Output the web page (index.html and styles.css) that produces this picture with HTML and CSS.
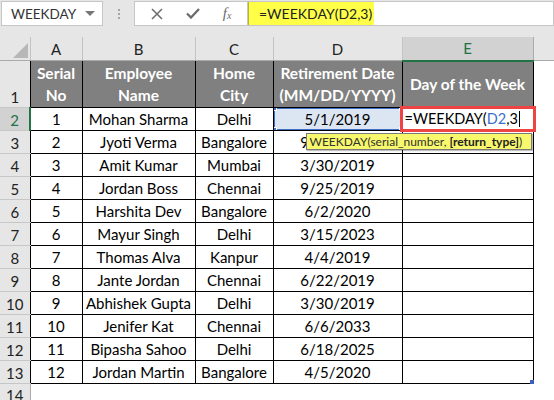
FILE: index.html
```html
<!DOCTYPE html>
<html lang="en">
<head>
    <meta charset="UTF-8">
    <title>WEEKDAY</title>
    <link rel="stylesheet" href="styles.css">
</head>
<body>
    <!-- formula bar -->
    <div class="topbar">
        <div class="namebox">
            <span class="namebox-text">WEEKDAY</span>
            <span class="caret"></span>
        </div>
        <div class="grip"><i></i><i></i><i></i></div>
        <div class="fbuttons">
            <svg class="ico" width="12" height="12" viewBox="0 0 12 12"><path d="M1 1 L11 11 M11 1 L1 11" stroke="#6b6b6b" stroke-width="1.5" fill="none"/></svg>
            <svg class="ico" width="14" height="11" viewBox="0 0 14 11"><path d="M1 5.5 L5 9.5 L13 1" stroke="#6b6b6b" stroke-width="2.3" fill="none"/></svg>
            <span class="fx">f<sub>x</sub></span>
        </div>
        <div class="finput"><span class="fhl">=WEEKDAY(D2,3)</span></div>
    </div>

    <!-- sheet -->
    <div class="sheet">
        <table class="grid">
            <colgroup>
                <col class="c-rh"><col class="c-a"><col class="c-b"><col class="c-c"><col class="c-d"><col class="c-e"><col class="c-f">
            </colgroup>
            <tr class="colhead">
                <th class="corner"><svg width="15" height="15" viewBox="0 0 15 15"><path d="M15 0 L15 15 L0 15 Z" fill="#b7b7b7"/></svg></th>
                <th>A</th><th>B</th><th>C</th><th>D</th><th class="sel">E</th><th class="f"></th>
            </tr>
            <tr class="r-head">
                <th class="rh">1</th>
                <td>Serial<br>No</td>
                <td>Employee<br>Name</td>
                <td>Home<br>City</td>
                <td>Retirement Date<br>(MM/DD/YYYY)</td>
                <td>Day of the Week</td>
                <td class="f"></td>
            </tr>
            <tr>
                <th class="rh sel">2</th>
                <td>1</td><td>Mohan Sharma</td><td>Delhi</td>
                <td class="ref">5/1/2019<span class="refbox"><i class="h tl"></i><i class="h tr"></i><i class="h bl"></i><i class="h br"></i></span></td>
                <td class="edit">=WEEKDAY(<span class="blue">D2</span>,3<span class="cursor"></span>
                    <span class="editbox"></span>
                    <div class="tip">WEEKDAY(serial_number, <b>[return_type]</b>)</div>
                </td>
                <td class="f"></td>
            </tr>
            <tr><th class="rh">3</th><td>2</td><td>Jyoti Verma</td><td>Bangalore</td><td>9/25/2021</td><td></td><td class="f"></td></tr>
            <tr><th class="rh">4</th><td>3</td><td>Amit Kumar</td><td>Mumbai</td><td>3/30/2019</td><td></td><td class="f"></td></tr>
            <tr><th class="rh">5</th><td>4</td><td>Jordan Boss</td><td>Chennai</td><td>9/25/2019</td><td></td><td class="f"></td></tr>
            <tr><th class="rh">6</th><td>5</td><td>Harshita Dev</td><td>Bangalore</td><td>6/2/2020</td><td></td><td class="f"></td></tr>
            <tr><th class="rh">7</th><td>6</td><td>Mayur Singh</td><td>Delhi</td><td>3/15/2023</td><td></td><td class="f"></td></tr>
            <tr><th class="rh">8</th><td>7</td><td>Thomas Alva</td><td>Kanpur</td><td>4/4/2019</td><td></td><td class="f"></td></tr>
            <tr><th class="rh">9</th><td>8</td><td>Jante Jordan</td><td>Chennai</td><td>6/22/2019</td><td></td><td class="f"></td></tr>
            <tr><th class="rh">10</th><td>9</td><td>Abhishek Gupta</td><td>Delhi</td><td>3/30/2019</td><td></td><td class="f"></td></tr>
            <tr><th class="rh">11</th><td>10</td><td>Jenifer Kat</td><td>Chennai</td><td>6/6/2033</td><td></td><td class="f"></td></tr>
            <tr><th class="rh">12</th><td>11</td><td>Bipasha Sahoo</td><td>Delhi</td><td>6/18/2025</td><td></td><td class="f"></td></tr>
            <tr><th class="rh">13</th><td>12</td><td>Jordan Martin</td><td>Bangalore</td><td>4/5/2020</td><td class="last"><i class="fill"></i></td><td class="f"></td></tr>
            <tr class="empty"><th class="rh">14</th><td></td><td></td><td></td><td></td><td></td><td class="f"></td></tr>
        </table>
    </div>
</body>
</html>
```

FILE: styles.css
```css
body {
    margin: 0;
    width: 554px;
    height: 400px;
    overflow: hidden;
    background: #ffffff;
    font-family: Lato, "Open Sans", sans-serif;
    color: #000;
}

/* === formula bar === */
.topbar {
    display: flex;
    align-items: flex-start;
    height: 37px;
    background: #e6e6e6;
    padding-top: 1px;
    box-sizing: border-box;
}

.namebox {
    display: flex;
    align-items: center;
    justify-content: space-between;
    width: 102px;
    height: 25px;
    margin-left: 1px;
    padding: 0 7px 0 9px;
    box-sizing: border-box;
    background: #fff;
    border: 1px solid #c6c6c6;
    font-size: 13.5px;
    color: #333;
}

.caret {
    width: 0;
    height: 0;
    border-left: 5px solid transparent;
    border-right: 5px solid transparent;
    border-top: 5px solid #777;
}

.grip {
    display: flex;
    flex-direction: column;
    gap: 2px;
    width: 31px;
    padding-top: 8px;
    align-items: center;
}

.grip i {
    display: block;
    width: 2px;
    height: 2px;
    background: #a6a6a6;
}

.fbuttons {
    display: flex;
    align-items: center;
    justify-content: space-around;
    width: 114px;
    height: 25px;
    box-sizing: border-box;
    padding: 0 4px;
    background: #fff;
    border: 1px solid #c6c6c6;
}

.fx {
    font-family: "Liberation Serif", serif;
    font-style: italic;
    font-size: 15px;
    color: #6b6b6b;
}

.fx sub {
    font-size: 10px;
    vertical-align: -1px;
}

.finput {
    flex: 1;
    height: 25px;
    box-sizing: border-box;
    background: #fff;
    border: 1px solid #c6c6c6;
    border-left: none;
}

.fhl {
    display: inline-block;
    height: 23px;
    line-height: 23px;
    width: 126px;
    padding-left: 10px;
    box-sizing: border-box;
    background: #ffff48;
    border-left: 1px solid #b8b830;
    font-size: 14px;
    color: #222;
}

/* === sheet === */
.sheet {
    width: 554px;
    overflow: hidden;
}

.grid {
    border-collapse: collapse;
    table-layout: fixed;
    width: 570px;
    font-size: 15px;
}

.c-rh { width: 30px; }
.c-a { width: 52px; }
.c-b { width: 113px; }
.c-c { width: 78px; }
.c-d { width: 129px; }
.c-e { width: 131px; }
.c-f { width: 37px; }

.grid td {
    border: 1px solid #000;
    text-align: center;
    vertical-align: middle;
    white-space: nowrap;
    overflow: hidden;
    padding: 0;
    height: 22px;
}

.grid td.f {
    border: none;
}

/* column letters */
.colhead th {
    height: 21px;
    padding: 0;
    font-weight: normal;
    color: #222;
    background: #e6e6e6;
    border-right: 1px solid #c3c3c3;
    border-bottom: 1px solid #ababab;
}

.colhead th.corner {
    text-align: right;
    vertical-align: bottom;
    padding: 0 2px 2px 0;
    line-height: 0;
}

.colhead th.sel {
    background: #d2d2d2;
    color: #217346;
    border-left: 1px solid #ababab;
    border-right: 1px solid #ababab;
    border-bottom: 2px solid #217346;
}

.colhead th.f {
    border-right: none;
}

/* row numbers */
.rh {
    padding: 0 0 1px 0;
    font-weight: normal;
    color: #222;
    background: #e6e6e6;
    border-bottom: 1px solid #c6c6c6;
    vertical-align: bottom;
    text-align: center;
}

.rh.sel {
    background: #d2d2d2;
    color: #217346;
    border-right: 2px solid #217346;
}

.r-head td {
    height: 45px;
    background: #808080;
    color: #fff;
    font-weight: bold;
    font-size: 15.5px;
    line-height: 22px;
}

.r-head td.f {
    background: #fff;
}

.empty td {
    border: none;
}

.empty .rh {
    border-right: 1px solid #ababab;
}

/* referenced cell D2 */
.ref {
    position: relative;
    background: #dce6f2;
}

.refbox {
    position: absolute;
    left: -1px;
    top: -1px;
    right: -1px;
    bottom: -1px;
    border: 2px solid #3f6fc6;
}

.refbox .h {
    position: absolute;
    width: 5px;
    height: 5px;
    background: #3f6fc6;
    border: 1px solid #fff;
}

.h.tl { left: -5px; top: -5px; }
.h.tr { right: -5px; top: -5px; }
.h.bl { left: -5px; bottom: -5px; }
.h.br { right: -5px; bottom: -5px; }

/* cell being edited E2 */
.grid td.edit {
    position: relative;
    overflow: visible;
    text-align: left;
    padding-left: 2px;
    font-size: 14.5px;
}

.blue {
    color: #3c6fd0;
}

.cursor {
    display: inline-block;
    width: 1px;
    height: 16px;
    background: #000;
    vertical-align: -3px;
    margin-left: 1px;
}

.editbox {
    position: absolute;
    left: -3px;
    top: -2px;
    right: -3px;
    bottom: -2px;
    border: 3px solid #ee4444;
}

.tip {
    position: absolute;
    left: -97px;
    top: 25px;
    z-index: 2;
    width: 226px;
    height: 17px;
    box-sizing: border-box;
    padding-left: 3px;
    background: #f8f86c;
    border: 1px solid #7a7a7a;
    box-shadow: 1px 1px 1px rgba(0, 0, 0, 0.25);
    font-size: 12px;
    line-height: 15px;
    color: #333;
    white-space: nowrap;
}

.tip b {
    color: #222;
}

/* fill handle E13 */
.grid td.last {
    position: relative;
    overflow: visible;
}

.fill {
    position: absolute;
    right: -1px;
    bottom: -1px;
    width: 4px;
    height: 4px;
    background: #3f5fbf;
}
```
